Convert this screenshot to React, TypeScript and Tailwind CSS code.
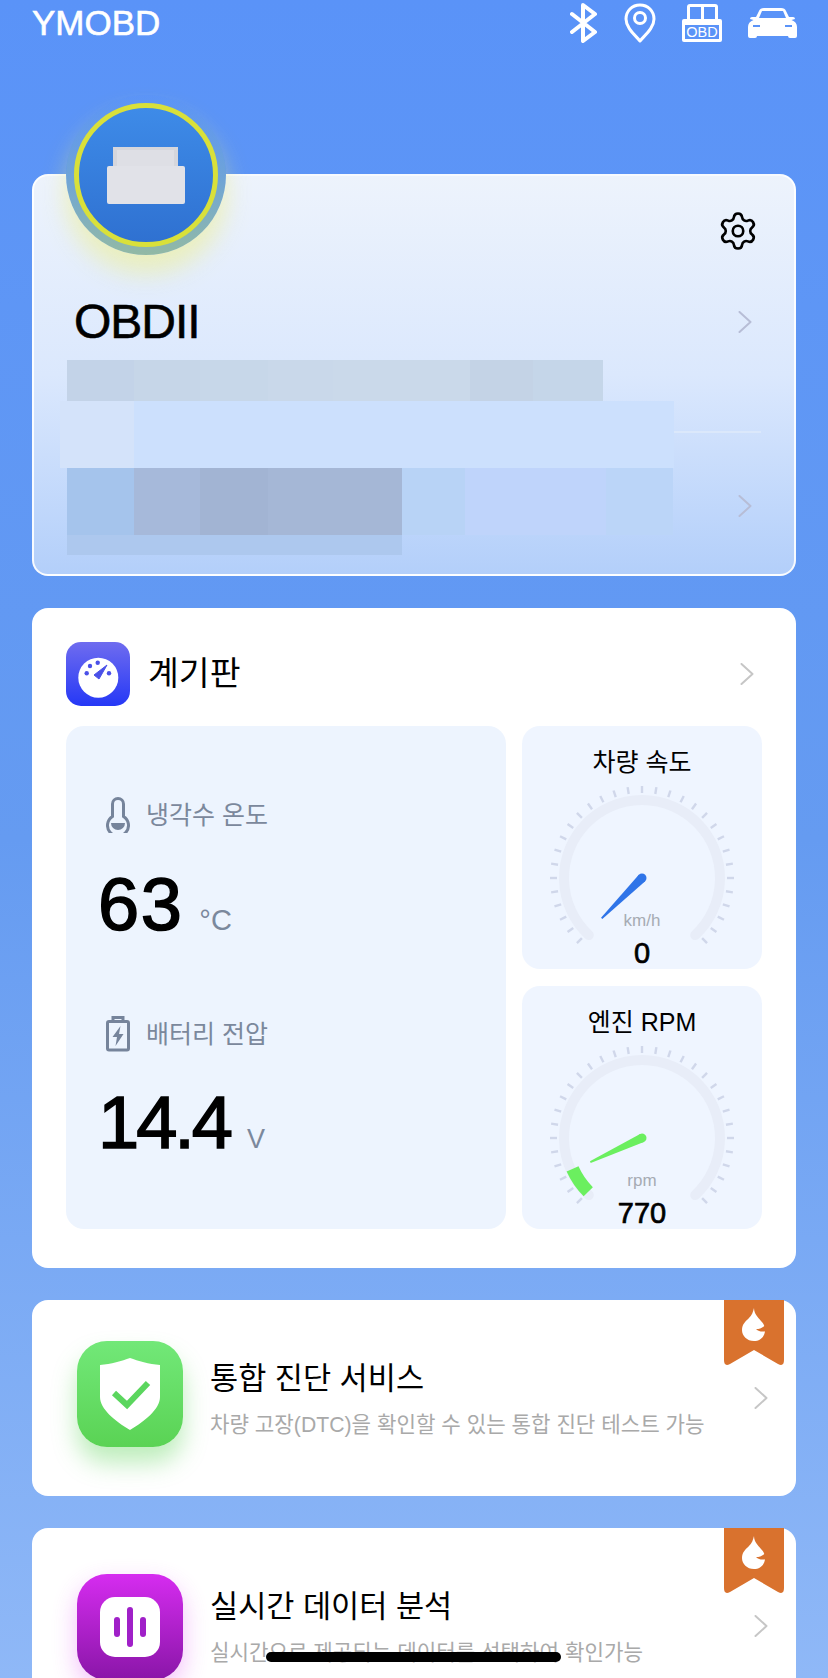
import { Settings } from "lucide-react";

const ticks = Array.from({ length: 31 }, (_, i) => 225 + i * 9);

function polar(r: number, deg: number) {
    const a = (deg * Math.PI) / 180;
    return { x: 100 + r * Math.sin(a), y: 100 - r * Math.cos(a) };
}

function arcPath(r: number, from: number, to: number) {
    const a = polar(r, from);
    const b = polar(r, to);
    const large = to - from > 180 ? 1 : 0;
    return `M${a.x} ${a.y} A${r} ${r} 0 ${large} 1 ${b.x} ${b.y}`;
}

function Chevron({ color }: { color: string }) {
    return (
        <svg width="14" height="22" viewBox="0 0 14 22" fill="none" className="shrink-0">
            <path d="M1.5 1 L12.5 11 L1.5 21" stroke={color} strokeWidth="2" strokeLinecap="round" strokeLinejoin="round" />
        </svg>
    );
}

function Gauge({ title, unit, value, needle, color, hasArc }: { title: string; unit: string; value: string; needle: number; color: string; hasArc?: boolean }) {
    return (
        <div className="bg-[#eff5ff] rounded-[18px] h-[243px] pt-[20px] flex flex-col items-center">
            <div className="text-[25px] leading-8 text-black">{title}</div>
            <div className="relative w-[200px] h-[190px]">
                <svg width="200" height="190" viewBox="0 0 200 190" fill="none">
                    {ticks.map((deg) => {
                        const a = polar(85, deg);
                        const b = polar(92, deg);
                        return <line key={deg} x1={a.x} y1={a.y} x2={b.x} y2={b.y} stroke="#d0d7ea" strokeWidth="2.4" />;
                    })}
                    <path d={arcPath(78, 223, 497)} stroke="#e8edf8" strokeWidth="10" strokeLinecap="round" />
                    {hasArc && <path d={arcPath(76, 225, 246)} stroke={color} strokeWidth="13" />}
                    <g transform={`translate(100 100) rotate(${needle})`}>
                        <circle r="4.5" fill={color} />
                        <path d="M-4.5 0 L4.5 0 L0.9 57 L-0.9 57 Z" fill={color} />
                    </g>
                </svg>
                <span className="absolute left-0 right-0 top-[131px] text-center text-[17px] leading-6 text-[#a6abb3]">{unit}</span>
                <span className="absolute left-0 right-0 top-[157px] text-center text-[29px] leading-9 text-black [-webkit-text-stroke:0.7px_black]">{value}</span>
            </div>
        </div>
    );
}

function Ribbon() {
    return (
        <svg width="60" height="66" viewBox="0 0 60 66" className="absolute top-0 right-3">
            <path d="M0 0 H60 V60 Q60 67 54 64 L30 50 L6 64 Q0 67 0 60 Z" fill="#d9722e" />
            <path d="M30 8 C30 14 34 17 37 21 C40 24 41 27 41 30 C41 37 36 41 30 41 C23 41 18 36 18 30 C18 24 22 21 25 18 C28 15 29 12 30 8 Z" fill="#fff" />
            <path d="M42 24 C39 28 36 29 32 29 C35 32 39 32 42 31 Z" fill="#d9722e" />
        </svg>
    );
}

function ServiceCard({ icon, iconTop, title, desc }: { icon: React.ReactNode; iconTop: string; title: string; desc: string }) {
    return (
        <div className="relative bg-white rounded-[16px] h-[196px] shrink-0 flex items-start pl-[45px]">
            <div className={iconTop}>{icon}</div>
            <div className="ml-[27px] pt-[58px] flex flex-col">
                <div className="text-[30.6px] leading-10 text-black whitespace-nowrap">{title}</div>
                <div className="mt-3 text-[21.2px] leading-[30px] text-[#a9a9a9] whitespace-nowrap">{desc}</div>
            </div>
            <div className="ml-auto mr-[28px] self-center">
                <Chevron color="#c6c6c6" />
            </div>
            <Ribbon />
        </div>
    );
}

export default function App() {
    return (
        <div className="relative w-[828px] h-[1678px] overflow-hidden bg-linear-to-b from-[#5a93f8] via-[#659bf1] to-[#8fb8f7] font-['Liberation_Sans','Noto_Sans_CJK_KR',sans-serif]">
            {/* Top bar */}
            <div className="h-[46px] pl-8 pr-[31px] flex items-center justify-between">
                <div className="text-[35px] leading-[46px] text-white [-webkit-text-stroke:0.6px_white]">YMOBD</div>
                <div className="flex items-center gap-[26px]">
                    <svg width="28" height="40" viewBox="0 0 28 40" fill="none">
                        <path d="M2 11 L25 29 L13 38 V2 L25 11 L2 29" stroke="#fff" strokeWidth="4" strokeLinejoin="round" strokeLinecap="round" />
                    </svg>
                    <svg width="32" height="40" viewBox="0 0 32 40" fill="none">
                        <path d="M16 2 C8 2 2 8 2 16 C2 25 11 32 16 38 C21 32 30 25 30 16 C30 8 24 2 16 2 Z" stroke="#fff" strokeWidth="3" strokeLinejoin="round" />
                        <circle cx="16" cy="15" r="5.5" stroke="#fff" strokeWidth="3" />
                    </svg>
                    <svg width="40" height="38" viewBox="0 0 40 38" fill="none">
                        <path d="M5 17 V3 Q5 0 8 0 H33 Q36 0 36 3 V17 Z" fill="#fff" />
                        <rect x="8" y="3" width="11" height="12" fill="#5a93f8" />
                        <rect x="22" y="3" width="11" height="12" fill="#5a93f8" />
                        <rect x="0" y="15" width="40" height="23" rx="2" fill="#fff" />
                        <rect x="3" y="21" width="34" height="14" fill="#5a93f8" />
                        <text x="20" y="33" textAnchor="middle" fontSize="14.5" fill="#fff" fontFamily="Liberation Sans">OBD</text>
                    </svg>
                    <svg width="49" height="30" viewBox="0 0 49 30" fill="none">
                        <path d="M11 3 Q12 0 16 0 H33 Q37 0 38 3 L41 9 H45 Q47 9 47 11 L43.5 12 Q49 14 49 19 V28 Q49 30 47 30 H42 Q40 30 40 28 H9 Q9 30 7 30 H2 Q0 30 0 28 V19 Q0 14 5.5 12 L2 11 Q2 9 4 9 H8 Z" fill="#fff" />
                        <path d="M14 3 H35 L38 10 H11 Z" fill="#5a93f8" />
                        <rect x="5" y="17" width="7" height="2" fill="#5a93f8" />
                        <rect x="37" y="17" width="7" height="2" fill="#5a93f8" />
                    </svg>
                </div>
            </div>

            <div className="mt-[128px] px-8 flex flex-col gap-8">
                {/* Device card */}
                <div className="relative h-[402px] shrink-0 rounded-[16px] border-2 border-white/90 bg-linear-to-b from-[#edf3fc] via-[#dbe8fd] via-50% to-[#b3cffa]">
                    <div className="absolute left-[32px] top-[-81px] w-[160px] h-[160px] rounded-full bg-linear-to-b from-transparent via-[#6ea3d8] to-[#92b9a4] shadow-[0_18px_24px_rgba(240,240,110,0.45)] flex items-center justify-center">
                        <div className="w-[144px] h-[144px] rounded-full border-[5px] border-[#d9e03a] bg-linear-to-b from-[#3e8be8] to-[#2f71d1] flex items-center justify-center">
                            <svg width="78" height="57" viewBox="0 0 78 57" fill="none">
                                <rect x="6" y="0" width="65" height="26" fill="#d5d6dc" />
                                <rect x="10" y="3" width="57" height="20" fill="#dedfe5" />
                                <path d="M2 19 H76 Q78 19 78 21 V55 Q78 57 76 57 H2 Q0 57 0 55 V21 Q0 19 2 19 Z" fill="#e1e2e8" />
                            </svg>
                        </div>
                    </div>

                    <div className="h-[34px]" />
                    <div className="flex justify-end pr-[35px]">
                        <Settings size={42} strokeWidth={1.5} color="#000" />
                    </div>

                    <div className="mt-[41px] pl-[40px] pr-[42px] flex items-center justify-between">
                        <div className="text-[48px] leading-[58px] tracking-[-1px] text-black [-webkit-text-stroke:0.6px_black]">OBDII</div>
                        <Chevron color="#b7bdd6" />
                    </div>

                    {/* Blurred details */}
                    <div className="mt-[9px] ml-[33px] flex h-[41px] w-[536px]">
                        <div className="w-[67px] bg-[#c3d3e8]" />
                        <div className="w-[66px] bg-[#c6d6e8]" />
                        <div className="w-[68px] bg-[#c7d7e9]" />
                        <div className="w-[65px] bg-[#c9d8ea]" />
                        <div className="w-[137px] bg-[#cad9ea]" />
                        <div className="w-[63px] bg-[#c4d3e6]" />
                        <div className="w-[70px] bg-[#c5d6e9]" />
                    </div>
                    <div className="ml-[26px] flex items-center">
                        <div className="flex h-[67px] w-[614px]">
                            <div className="w-[74px] bg-[#d4e3fa]" />
                            <div className="flex-1 bg-[#cce0fd]" />
                        </div>
                        <div className="w-[87px] h-[2px] mb-[6px] bg-[#dbe8fb]" />
                    </div>
                    <div className="ml-[33px] pr-[42px] flex items-center justify-between">
                        <div className="flex h-[67px] w-[606px]">
                            <div className="w-[67px] bg-[#a5c4ec]" />
                            <div className="w-[66px] bg-[#a6b9da]" />
                            <div className="w-[68px] bg-[#a2b4d3]" />
                            <div className="w-[134px] bg-[#a5b7d6]" />
                            <div className="w-[63px] bg-[#b8d3f6]" />
                            <div className="w-[141px] bg-[#bfd4fb]" />
                            <div className="flex-1 bg-[#bbd5f8]" />
                        </div>
                        <div className="mt-[8px]">
                            <Chevron color="#b7bdd6" />
                        </div>
                    </div>
                    <div className="ml-[33px] w-[335px] h-[20px] bg-[#adc8ee]" />
                </div>

                {/* Dashboard */}
                <div className="bg-white rounded-[16px] h-[660px] shrink-0 pt-[34px] px-[34px]">
                    <div className="flex items-center h-16">
                        <svg width="64" height="64" viewBox="0 0 64 64" fill="none">
                            <defs>
                                <linearGradient id="dash" x1="0" y1="0" x2="0" y2="1">
                                    <stop offset="0" stopColor="#6f6cef" />
                                    <stop offset="1" stopColor="#2538f6" />
                                </linearGradient>
                            </defs>
                            <rect width="64" height="64" rx="15" fill="url(#dash)" />
                            <circle cx="32.3" cy="35.7" r="20" fill="#fff" />
                            <circle cx="20.7" cy="31.3" r="2.2" fill="#4a50e8" />
                            <circle cx="24" cy="24" r="2.2" fill="#4a50e8" />
                            <circle cx="31.7" cy="20.7" r="2.2" fill="#4a50e8" />
                            <circle cx="43" cy="31.3" r="2.2" fill="#4a50e8" />
                            <path d="M28 33 L33 37 L41 23 Z" fill="#4a50e8" stroke="#4a50e8" strokeLinejoin="round" />
                        </svg>
                        <div className="ml-[18px] text-[33.5px] leading-10 text-black">계기판</div>
                        <div className="ml-auto mr-2">
                            <Chevron color="#c6c6c6" />
                        </div>
                    </div>
                    <div className="mt-5 flex gap-[16px]">
                        <div className="w-[440px] h-[503px] rounded-[18px] bg-[#edf4fe] pt-[71px] pl-[32px]">
                            <div className="ml-[8px] flex items-center gap-4 h-9">
                                <svg width="24" height="36" viewBox="0 0 24 36" fill="none">
                                    <path d="M6.5 19.5 V7 A5.5 5.5 0 0 1 17.5 7 V19.5 A10.5 10.5 0 1 1 6.5 19.5 Z" stroke="#76849b" strokeWidth="3" />
                                    <path d="M5 26 H19 A7 7 0 0 1 5 26 Z" fill="#76849b" />
                                </svg>
                                <span className="text-[25px] leading-9 text-[#7b889c]">냉각수 온도</span>
                            </div>
                            <div className="mt-[35px] flex items-baseline">
                                <span className="text-[74px] leading-[74px] tracking-[1.5px] text-black [-webkit-text-stroke:1.6px_black]">63</span>
                                <span className="ml-[16px] text-[29px] text-[#7b889c]">°C</span>
                            </div>
                            <div className="mt-[73px] ml-[8px] flex items-center gap-4 h-9">
                                <svg width="24" height="36" viewBox="0 0 24 36" fill="none">
                                    <path d="M7 6 V1.5 H17 V6" stroke="#76849b" strokeWidth="3" />
                                    <rect x="1.5" y="5.5" width="21" height="28.5" rx="1.5" stroke="#76849b" strokeWidth="3" />
                                    <path d="M14.5 10 L6.5 21 H11 L9.5 30 L17.5 18 H13 Z" fill="#76849b" />
                                </svg>
                                <span className="text-[25px] leading-9 text-[#7b889c]">배터리 전압</span>
                            </div>
                            <div className="mt-[34px] flex items-baseline">
                                <span className="text-[74px] leading-[74px] tracking-[-3px] text-black [-webkit-text-stroke:1.6px_black]">14.4</span>
                                <span className="ml-[17px] text-[27px] text-[#7b889c]">V</span>
                            </div>
                        </div>
                        <div className="w-[240px] flex flex-col gap-[17px]">
                            <Gauge title="차량 속도" unit="km/h" value="0" needle={45} color="#2f74e8" />
                            <Gauge title="엔진 RPM" unit="rpm" value="770" needle={65} color="#6bef5f" hasArc />
                        </div>
                    </div>
                </div>

                <ServiceCard
                    iconTop="mt-[41px]"
                    title="통합 진단 서비스"
                    desc="차량 고장(DTC)을 확인할 수 있는 통합 진단 테스트 가능"
                    icon={
                        <div className="w-[106px] h-[106px] rounded-[30px] bg-linear-to-b from-[#72e878] to-[#5ad354] shadow-[0_16px_24px_rgba(90,211,84,0.4)]">
                            <svg width="106" height="106" viewBox="0 0 106 106" fill="none">
                                <path d="M53 17 C61 20 72 23 83 24 V56 C83 68 68 80 53 89 C38 80 23 68 23 56 V24 C34 23 45 20 53 17 Z" fill="#fff" />
                                <path d="M37 52 L50 64 L71 42" stroke="#5bd65e" strokeWidth="6" />
                            </svg>
                        </div>
                    }
                />
                <ServiceCard
                    iconTop="mt-[46px]"
                    title="실시간 데이터 분석"
                    desc="실시간으로 제공되는 데이터를 선택하여 확인가능"
                    icon={
                        <div className="w-[106px] h-[106px] rounded-[30px] bg-linear-to-b from-[#d62cf0] to-[#8a16a8] shadow-[0_10px_24px_rgba(214,44,240,0.3)] flex items-center justify-center">
                            <div className="w-[60px] h-[60px] rounded-[15px] bg-white flex items-center justify-center gap-[7px]">
                                <div className="w-[6px] h-[20px] rounded-full bg-[#a020c8]" />
                                <div className="w-[6px] h-[40px] rounded-full bg-[#a020c8]" />
                                <div className="w-[6px] h-[20px] rounded-full bg-[#a020c8]" />
                            </div>
                        </div>
                    }
                />
            </div>

            {/* Home indicator */}
            <div className="absolute left-[266px] top-[1652px] w-[295px] h-[10px] rounded-full bg-black" />
        </div>
    );
}
